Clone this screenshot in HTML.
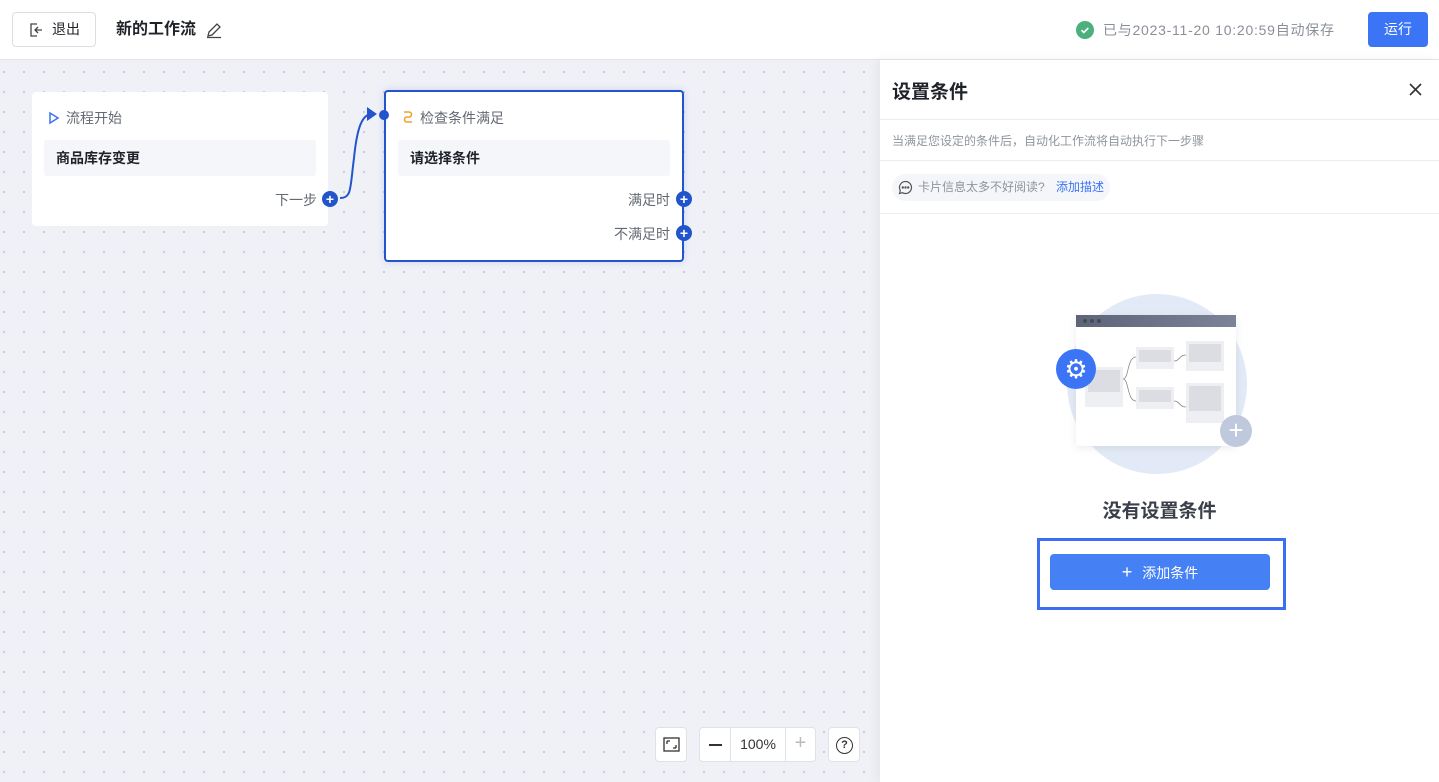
<!DOCTYPE html>
<html><head><meta charset="utf-8">
<style>
*{box-sizing:border-box;margin:0;padding:0}
body{width:1439px;height:782px;overflow:hidden;font-family:"Liberation Sans","Noto Sans CJK SC",sans-serif;background:#fff;position:relative;color:#1f2329}
.abs{position:absolute}
.top{left:0;top:0;width:1439px;height:60px;background:#fff;border-bottom:1px solid #e4e5ea}
.canvas{left:0;top:60px;width:880px;height:722px;background-color:#f0f1f7;background-image:radial-gradient(circle,#c9cbd6 1px,transparent 1.3px);background-size:20px 20px;background-position:-6px 2px}
.panel{left:880px;top:60px;width:559px;height:722px;background:#fff;box-shadow:-4px 0 10px rgba(0,0,0,0.05)}
.card{background:#fff;border-radius:4px}
.inner{background:#f5f6fa;border-radius:3px;font-size:14px;font-weight:bold;color:#1f2329;padding-left:12px;line-height:36px}
.plus{width:16px;height:16px;border-radius:50%;background:#2255cc;color:#fff;font-size:14px;line-height:16px;text-align:center;font-weight:bold}
.lbl{font-size:14px;color:#646a73}
.ctrl{background:#fff;border:1px solid #dfe1e6;border-radius:4px}
</style></head><body>
<div class="abs top">
  <div class="abs" style="left:12px;top:12px;width:84px;height:35px;border:1px solid #dcdee3;border-radius:4px;font-size:14px;line-height:33px;color:#1f2329">
    <svg class="abs" style="left:15px;top:9px" width="16" height="16" viewBox="0 0 16 16" fill="none" stroke="#444" stroke-width="1.3"><path d="M9 2H3v12h6M7 8h7M10 5l-3 3 3 3"/></svg>
    <span class="abs" style="left:39px;top:0">退出</span>
  </div>
  <div class="abs" style="left:116px;top:19px;font-size:16px;font-weight:bold;line-height:22px">新的工作流</div>
  <svg class="abs" style="left:205px;top:21px" width="18" height="18" viewBox="0 0 18 18" fill="none" stroke="#444" stroke-width="1.3"><path d="M3 15l1-4 8-8 3 3-8 8zM2 16.5h14"/></svg>
  <div class="abs" style="left:1076px;top:21px;width:18px;height:18px;border-radius:50%;background:#4caf7c"><svg width="18" height="18" viewBox="0 0 18 18"><path d="M5.5 9.2l2.3 2.3 4.5-4.5" stroke="#fff" stroke-width="1.6" fill="none"/></svg></div>
  <div class="abs" style="left:1103px;top:20px;font-size:14px;color:#8a8f99;line-height:20px;letter-spacing:0.75px">已与2023-11-20 10:20:59自动保存</div>
  <div class="abs" style="left:1368px;top:12px;width:60px;height:35px;background:#3b74f4;border-radius:4px;color:#fff;font-size:14px;text-align:center;line-height:35px">运行</div>
</div>
<div class="abs canvas">
  <div class="abs card" style="left:32px;top:32px;width:296px;height:134px">
    <svg class="abs" style="left:16px;top:19px" width="12" height="14" viewBox="0 0 12 14"><path d="M2 2l8 5-8 5z" fill="none" stroke="#3b74f4" stroke-width="1.5"/></svg>
    <div class="abs lbl" style="left:34px;top:16px">流程开始</div>
    <div class="abs inner" style="left:12px;top:48px;width:272px;height:36px">商品库存变更</div>
    <div class="abs lbl" style="left:243px;top:98px">下一步</div>
    <div class="abs plus" style="left:290px;top:99px">+</div>
  </div>
  <svg class="abs" style="left:330px;top:40px" width="60" height="110" viewBox="0 0 60 110"><path d="M10 98c12 0 10-10 14-40 3-30 8-44 18-44" fill="none" stroke="#2255cc" stroke-width="2"/><path d="M37 7l10 7-10 7z" fill="#2255cc"/></svg>
  <div class="abs card" style="left:384px;top:30px;width:300px;height:172px;border:2px solid #2255cc;box-shadow:0 0 8px rgba(60,100,220,0.2)">
    <div class="abs" style="left:-7px;top:18px;width:10px;height:10px;border-radius:50%;background:#2255cc"></div>
    <svg class="abs" style="left:16px;top:18px" width="12" height="14" viewBox="0 0 12 14" fill="none" stroke="#f0a030" stroke-width="1.6"><path d="M2 2h5a2.5 2.5 0 0 1 0 5H5a2.5 2.5 0 0 0 0 5h5"/></svg>
    <div class="abs lbl" style="left:34px;top:16px">检查条件满足</div>
    <div class="abs inner" style="left:12px;top:48px;width:272px;height:36px">请选择条件</div>
    <div class="abs lbl" style="left:242px;top:98px">满足时</div>
    <div class="abs plus" style="left:290px;top:99px">+</div>
    <div class="abs lbl" style="left:228px;top:132px">不满足时</div>
    <div class="abs plus" style="left:290px;top:133px">+</div>
  </div>
  <div class="abs ctrl" style="left:655px;top:667px;width:32px;height:35px">
    <svg class="abs" style="left:7px;top:9px" width="17" height="15" viewBox="0 0 17 15" fill="none" stroke="#333" stroke-width="1.3"><rect x="1" y="1" width="15" height="13"/><path d="M4 4h3M4 4v3M13 11h-3M13 11v-3"/></svg>
  </div>
  <div class="abs ctrl" style="left:699px;top:667px;width:117px;height:35px;font-size:14px;color:#333">
    <div class="abs" style="left:0;top:0;width:31px;height:33px;border-right:1px solid #dfe1e6"><div class="abs" style="left:9px;top:16px;width:13px;height:1.6px;background:#333"></div></div>
    <div class="abs" style="left:31px;top:0;width:54px;height:33px;line-height:33px;text-align:center">100%</div>
    <div class="abs" style="left:85px;top:0;width:30px;height:33px;border-left:1px solid #dfe1e6;color:#bbb;font-size:20px;line-height:31px;text-align:center">+</div>
  </div>
  <div class="abs ctrl" style="left:828px;top:667px;width:32px;height:35px">
    <div class="abs" style="left:7px;top:9px;width:17px;height:17px;border:1.4px solid #333;border-radius:50%;font-size:11px;font-weight:bold;text-align:center;line-height:15px;color:#333">?</div>
  </div>
</div>
<div class="abs panel">
  <div class="abs" style="left:12px;top:17px;font-size:19px;font-weight:bold;color:#1f2329">设置条件</div>
  <svg class="abs" style="left:528px;top:22px" width="15" height="15" viewBox="0 0 15 15"><path d="M2 2l11 11M13 2L2 13" stroke="#333" stroke-width="1.6"/></svg>
  <div class="abs" style="left:0;top:59px;width:559px;height:1px;background:#ebedf0"></div>
  <div class="abs" style="left:12px;top:72px;font-size:12px;color:#8f959e">当满足您设定的条件后，自动化工作流将自动执行下一步骤</div>
  <div class="abs" style="left:0;top:100px;width:559px;height:1px;background:#ebedf0"></div>
  <div class="abs" style="left:12px;top:114px;width:218px;height:27px;border-radius:14px;background:#f5f6fa;font-size:12px;color:#8f959e;line-height:27px">
    <svg class="abs" style="left:6px;top:6px" width="15" height="15" viewBox="0 0 15 15" fill="none" stroke="#555" stroke-width="1.2"><path d="M7.5 1.5a6 6 0 1 1-3 11.2L1.5 13.5l.8-3A6 6 0 0 1 7.5 1.5z"/><circle cx="4.8" cy="7.5" r=".6" fill="#555"/><circle cx="7.5" cy="7.5" r=".6" fill="#555"/><circle cx="10.2" cy="7.5" r=".6" fill="#555"/></svg>
    <span class="abs" style="left:26px">卡片信息太多不好阅读?</span><span class="abs" style="left:164px;color:#3b74f4">添加描述</span>
  </div>
  <div class="abs" style="left:0;top:153px;width:559px;height:1px;background:#ebedf0"></div>
  <div class="abs" style="left:187px;top:234px;width:180px;height:180px;border-radius:50%;background:#e3eaf7"></div>
  <div class="abs" style="left:196px;top:255px;width:160px;height:131px;background:#fff;box-shadow:0 2px 8px rgba(0,0,0,0.08)">
    <div style="height:12px;background:linear-gradient(90deg,#5d6477,#7c8398)"></div>
    <div class="abs" style="left:7px;top:4px;width:4px;height:4px;border-radius:50%;background:#444a5a"></div>
    <div class="abs" style="left:14px;top:4px;width:4px;height:4px;border-radius:50%;background:#444a5a"></div>
    <div class="abs" style="left:21px;top:4px;width:4px;height:4px;border-radius:50%;background:#444a5a"></div>
    <div class="abs" style="left:9px;top:52px;width:38px;height:40px;background:#eeeff3"><div style="margin:3px;height:22px;background:#dcdde3"></div></div>
    <div class="abs" style="left:60px;top:32px;width:38px;height:22px;background:#eeeff3"><div style="margin:3px;height:12px;background:#dcdde3"></div></div>
    <div class="abs" style="left:60px;top:72px;width:38px;height:22px;background:#eeeff3"><div style="margin:3px;height:12px;background:#dcdde3"></div></div>
    <div class="abs" style="left:110px;top:26px;width:38px;height:30px;background:#eeeff3"><div style="margin:3px;height:18px;background:#dcdde3"></div></div>
    <div class="abs" style="left:110px;top:68px;width:38px;height:40px;background:#eeeff3"><div style="margin:3px;height:25px;background:#dcdde3"></div></div>
    <svg class="abs" style="left:47px;top:34px" width="64" height="64" viewBox="0 0 64 64" fill="none" stroke="#888" stroke-width=".8"><path d="M0 30c6 0 4-22 13-22M0 30c6 0 4 22 13 22M51 12c6 0 5-6 12-6M51 52c6 0 5 6 12 6"/></svg>
  </div>
  <div class="abs" style="left:176px;top:289px;width:40px;height:40px;border-radius:50%;background:#3b74f4;color:#fff;font-size:26px;text-align:center;line-height:40px">⚙</div>
  <div class="abs" style="left:340px;top:355px;width:32px;height:32px;border-radius:50%;background:#bfc8dc;color:#fff;font-size:26px;text-align:center;line-height:31px">+</div>
  <div class="abs" style="left:0;top:436px;width:559px;text-align:center;font-size:19px;font-weight:bold;color:#3a3f4a">没有设置条件</div>
  <div class="abs" style="left:157px;top:478px;width:249px;height:72px;border:3px solid #3b6ef0"></div>
  <div class="abs" style="left:170px;top:494px;width:220px;height:36px;background:#4680f5;border-radius:4px;color:#fff;font-size:14px;text-align:center;line-height:36px"><span style="font-size:18px;margin-right:10px">+</span>添加条件</div>
</div>
</body></html>
